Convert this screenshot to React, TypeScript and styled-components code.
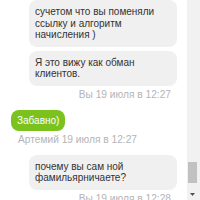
import { FunctionComponent, useLayoutEffect, useRef } from 'react';
import styled, { createGlobalStyle } from 'styled-components';

const GlobalStyle = createGlobalStyle`
  html, body {
    margin: 0;
    padding: 0;
    background: #fff;
  }
  body {
    font-family: "Liberation Sans", Arial, sans-serif;
  }
`;

type Side = 'me' | 'them';

interface Message {
  side: Side;
  texts: string[];
  stamp: string;
}

const messages: Message[] = [
  {
    side: 'me',
    texts: ['сучетом что вы поменяли ссылку и алгоритм начисления )', 'Я это вижу как обман клиентов.'],
    stamp: 'Вы 19 июля в 12:27',
  },
  { side: 'them', texts: ['Забавно)'], stamp: 'Артемий 19 июля в 12:27' },
  { side: 'me', texts: ['почему вы сам ной фамильярничаете?'], stamp: 'Вы 19 июля в 12:28' },
];

const Frame = styled.div`
  display: flex;
  width: 200px;
  height: 200px;
  overflow: hidden;
`;

const Feed = styled.div`
  flex: 1;
  height: 200px;
  overflow: hidden;
`;

const List = styled.div`
  display: flex;
  flex-direction: column;
  gap: 9px;
  padding: 12px 10px 20px 11px;
`;

const Group = styled.div<{ $side: Side }>`
  display: flex;
  flex-direction: column;
  gap: 4px;
  align-items: ${p => (p.$side === 'me' ? 'flex-end' : 'flex-start')};
`;

const Bubble = styled.div<{ $side: Side }>`
  max-width: 148px;
  box-sizing: border-box;
  padding: ${p => (p.$side === 'me' ? '6px 6px 6px' : '5px 6px 4.5px')};
  border-radius: 8px;
  font-size: 10px;
  line-height: 11.5px;
  background: ${p => (p.$side === 'me' ? '#f0f0f0' : '#7cc21f')};
  color: ${p => (p.$side === 'me' ? '#333' : '#fff')};
`;

const Stamp = styled.div<{ $side: Side }>`
  margin-top: -1px;
  padding: 0 ${p => (p.$side === 'me' ? '6px' : '0')} 0 ${p => (p.$side === 'me' ? '0' : '7px')};
  font-size: 10.2px;
  line-height: 12px;
  color: #b4b4b4;
`;

const Track = styled.div`
  display: flex;
  flex-direction: column;
  justify-content: flex-end;
  width: 13px;
  height: 200px;
  background: #f1f1f1;
`;

const Thumb = styled.div`
  width: 9px;
  height: 21px;
  margin: 0 0 6px 1px;
  background: #c1c1c1;
`;

const ArrowButton = styled.div`
  display: flex;
  align-items: center;
  justify-content: center;
  height: 11px;
  padding-right: 3px;
`;

const App: FunctionComponent = () => {
  const feed = useRef<HTMLDivElement>(null);

  useLayoutEffect(() => {
    if (feed.current) feed.current.scrollTop = 12;
  }, []);

  return (
    <Frame>
      <GlobalStyle />
      <Feed ref={feed}>
        <List>
          {messages.map((m, i) => (
            <Group key={i} $side={m.side}>
              {m.texts.map((t, j) => (
                <Bubble key={j} $side={m.side}>
                  {t}
                </Bubble>
              ))}
              <Stamp $side={m.side}>{m.stamp}</Stamp>
            </Group>
          ))}
        </List>
      </Feed>
      <Track>
        <Thumb />
        <ArrowButton>
          <svg width="5" height="3" viewBox="0 0 5 3">
            <path d="M0 0h5L2.5 3z" fill="#505050" />
          </svg>
        </ArrowButton>
      </Track>
    </Frame>
  );
};

export default App;
